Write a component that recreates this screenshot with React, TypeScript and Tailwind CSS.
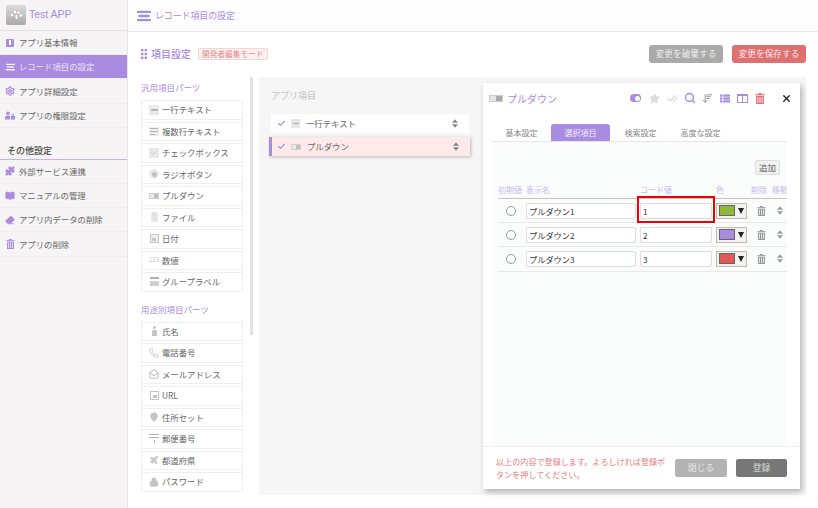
import {
  Star,
  CheckCheck,
  Search,
  ArrowDownWideNarrow,
  Check,
  X,
  Settings,
  Puzzle,
  BookOpen,
  Eraser,
  MailOpen,
  MapPin,
  Lock,
  Plane,
  Phone,
} from 'lucide-react'
import type { ReactNode } from 'react'

const jp = 'font-["Noto_Sans_CJK_JP","Noto_Sans",sans-serif]'

function Hamburger({ className }: { className: string }) {
  return (
    <svg className={className} viewBox="0 0 16 12" fill="currentColor">
      <rect x="0" y="0" width="16" height="2.6" rx="0.6" />
      <rect x="1.5" y="4.7" width="13" height="2.6" rx="0.6" />
      <rect x="0" y="9.4" width="16" height="2.6" rx="0.6" />
    </svg>
  )
}

function Updown({ className = 'text-[#888]' }: { className?: string }) {
  return (
    <svg className={`w-[6px] h-[9px] ${className}`} viewBox="0 0 7 10" fill="currentColor">
      <path d="M3.5 0 7 4H0z" />
      <path d="M3.5 10 0 6h7z" />
    </svg>
  )
}

function TrashIcon({ className }: { className: string }) {
  return (
    <svg className={className} viewBox="0 0 12 13" fill="currentColor">
      <rect x="0.5" y="1.4" width="11" height="1.3" />
      <rect x="4" y="0" width="4" height="1.4" />
      <path d="M1.4 3.4h9.2V13H1.4zM3 4.6v7.2h1V4.6zm2.5 0v7.2h1V4.6zm2.5 0v7.2h1V4.6z" fillRule="evenodd" />
    </svg>
  )
}

function PartBox({ children }: { children: ReactNode }) {
  return <span className="w-[10px] h-[10px] flex items-center justify-center bg-[#e9e9e9] text-[#bbb]">{children}</span>
}

const lineIcon = (
  <PartBox>
    <span className="w-[7px] h-[1.5px] bg-[#b5b5b5]" />
  </PartBox>
)

const pulldownIcon = (
  <span className="w-[10px] h-[6px] flex justify-end bg-[#e9e9e9] border border-[#d0d0d0]">
    <span className="w-[4px] h-full bg-[#c0c0c0]" />
  </span>
)

const iconCls = 'w-[10px] h-[10px] text-[#c4c4c4]'

const basicParts: { label: string; icon: ReactNode }[] = [
  { label: '一行テキスト', icon: lineIcon },
  {
    label: '複数行テキスト',
    icon: (
      <span className="w-[10px] h-[9px] flex flex-col justify-between py-[1px] px-[1px] bg-[#ececec]">
        <span className="h-px bg-[#b5b5b5]" />
        <span className="h-px bg-[#b5b5b5]" />
        <span className="h-px w-[5px] bg-[#b5b5b5]" />
      </span>
    ),
  },
  {
    label: 'チェックボックス',
    icon: (
      <PartBox>
        <Check className="w-[8px] h-[8px] text-[#bbb]" strokeWidth={2} />
      </PartBox>
    ),
  },
  {
    label: 'ラジオボタン',
    icon: (
      <span className="w-[10px] h-[10px] rounded-full bg-[#e9e9e9] flex items-center justify-center">
        <span className="w-[5px] h-[5px] rounded-full bg-[#c0c0c0]" />
      </span>
    ),
  },
  { label: 'プルダウン', icon: pulldownIcon },
  { label: 'ファイル', icon: <span className="w-[7px] h-[10px] bg-[#e2e2e2] border border-[#ececec]" /> },
  {
    label: '日付',
    icon: (
      <span className="w-[9px] h-[9px] border border-[#c4c4c4] bg-[#f0f0f0] flex items-end justify-center">
        <span className="w-[4px] h-[3px] bg-[#c4c4c4] mb-px" />
      </span>
    ),
  },
  { label: '数値', icon: <span className="text-[6px] text-[#c4c4c4] leading-none">123</span> },
  {
    label: 'グループラベル',
    icon: (
      <span className="w-[9px] h-[9px] flex flex-col justify-between">
        <span className="h-[2px] bg-[#b0b0b0]" />
        <span className="h-[5px] bg-[#d0d0d0]" />
      </span>
    ),
  },
]

const usageParts: { label: string; icon: ReactNode }[] = [
  {
    label: '氏名',
    icon: (
      <span className="flex flex-col items-center gap-[1px]">
        <span className="w-[3px] h-[3px] rounded-full bg-[#c4c4c4]" />
        <span className="w-[5px] h-[6px] rounded-t-[1px] bg-[#c4c4c4]" />
      </span>
    ),
  },
  { label: '電話番号', icon: <Phone className={iconCls} /> },
  { label: 'メールアドレス', icon: <MailOpen className={iconCls} strokeWidth={2.5} /> },
  {
    label: 'URL',
    icon: (
      <span className="w-[9px] h-[9px] border border-[#c4c4c4] flex items-end justify-end p-px">
        <span className="w-[4px] h-[3px] bg-[#c4c4c4]" />
      </span>
    ),
  },
  { label: '住所セット', icon: <MapPin className={iconCls} fill="currentColor" /> },
  {
    label: '郵便番号',
    icon: (
      <span className="w-[10px] h-[9px] flex flex-col items-center gap-[2px]">
        <span className="w-full h-px bg-[#b5b5b5]" />
        <span className="w-full h-px bg-[#b5b5b5]" />
        <span className="w-px h-[4px] bg-[#b5b5b5]" />
      </span>
    ),
  },
  { label: '都道府県', icon: <Plane className={iconCls} fill="currentColor" /> },
  { label: 'パスワード', icon: <Lock className={iconCls} fill="currentColor" /> },
]

function PartList({ title, parts }: { title: string; parts: { label: string; icon: ReactNode }[] }) {
  return (
    <div>
      <p className="text-[8.5px] leading-[14px] text-[#a98ce0] h-[14px] mb-[6px]">{title}</p>
      <div className="flex flex-col gap-[2px]">
        {parts.map((p) => (
          <div
            key={p.label}
            className="h-[19.5px] border border-[#efefef] flex items-center pl-[5px] bg-white text-[8.4px] text-[#666]"
          >
            <span className="w-[14px] flex items-center justify-center mr-[1px]">{p.icon}</span>
            {p.label}
          </div>
        ))}
      </div>
    </div>
  )
}

function SideItem({ label, icon, active }: { label: string; icon: ReactNode; active?: boolean }) {
  return (
    <div
      className={`h-[24.2px] flex items-center pl-[5px] text-[8.4px] border-b border-[#efedee] ${
        active ? 'bg-[#a98ce0] text-[#e9e2f7] border-[#a98ce0]' : 'text-[#666]'
      }`}
    >
      <span className={`w-[10px] flex justify-center mr-[4px] ${active ? 'text-[#f3effb]' : 'text-[#a98ce0]'}`}>{icon}</span>
      {label}
    </div>
  )
}

const rows = [
  { name: 'プルダウン1', code: '1', color: 'bg-[#8fb83a]' },
  { name: 'プルダウン2', code: '2', color: 'bg-[#a98ce0]' },
  { name: 'プルダウン3', code: '3', color: 'bg-[#e05a5a]' },
]

const gridCols = 'grid grid-cols-[28px_114px_76px_35px_21px_21px]'

export default function App() {
  const sideIcon = 'w-[10px] h-[10px]'
  return (
    <div className={`w-[818px] h-[508px] flex overflow-hidden bg-white ${jp}`}>
      {/* Sidebar */}
      <aside className="w-[128px] shrink-0 bg-[#f6f4f5] border-r border-[#e6e4e5]">
        <div className="h-[30px] flex items-center pl-[6px] gap-[3px]">
          <div className="w-[20px] h-[20px] rounded-[2px] bg-gradient-to-b from-[#dcdcdc] to-[#a9a9a9] flex items-center justify-center">
            <svg className="w-[13px] h-[10px] text-white" viewBox="0 0 13 10" fill="currentColor">
              <circle cx="2" cy="5" r="1.2" />
              <circle cx="5" cy="2" r="1.2" />
              <circle cx="8.5" cy="2.6" r="1.2" />
              <circle cx="11" cy="5.5" r="1.2" />
              <rect x="5.6" y="5" width="1.8" height="4" rx="0.9" />
            </svg>
          </div>
          <span className="text-[10.5px] text-[#a98ce0] font-['Liberation_Sans',sans-serif]">Test APP</span>
        </div>
        <div className="border-t border-[#e2e0e1]">
          <SideItem
            label="アプリ基本情報"
            icon={
              <span className="w-[8px] h-[8px] rounded-[1px] bg-[#a98ce0] flex items-center justify-center">
                <span className="w-[2px] h-[5px] bg-white" />
              </span>
            }
          />
          <SideItem label="レコード項目の設定" active icon={<Hamburger className="w-[9px] h-[8px]" />} />
          <SideItem label="アプリ詳細設定" icon={<Settings className={sideIcon} strokeWidth={3} />} />
          <SideItem
            label="アプリの権限設定"
            icon={
              <svg className="w-[11px] h-[9px]" viewBox="0 0 11 9" fill="currentColor">
                <circle cx="3.2" cy="2" r="2" />
                <path d="M0 9V6.6C0 5.4 1.2 4.6 3.2 4.6c.9 0 1.6.2 2.2.5V9z" />
                <rect x="6.4" y="5" width="4.6" height="4" />
                <path d="M7.4 5V3.8a1.3 1.3 0 0 1 2.6 0V5H9.2V3.8a.5.5 0 0 0-1 0V5z" />
              </svg>
            }
          />
        </div>
        <p className="text-[9px] font-medium text-[#444] mt-[16px] pl-[7px] h-[15px] leading-[14px]">その他設定</p>
        <div className="border-t border-[#c5b4ea]">
          <SideItem label="外部サービス連携" icon={<Puzzle className={sideIcon} fill="currentColor" />} />
          <SideItem label="マニュアルの管理" icon={<BookOpen className={sideIcon} fill="currentColor" />} />
          <SideItem label="アプリ内データの削除" icon={<Eraser className={sideIcon} fill="currentColor" />} />
          <SideItem label="アプリの削除" icon={<TrashIcon className="w-[9px] h-[10px]" />} />
        </div>
      </aside>

      {/* Main */}
      <main className="flex-1 flex flex-col min-w-0">
        <header className="h-[32px] shrink-0 border-b border-[#e4e4e4] flex items-center pl-[9px] gap-[4px] text-[#a98ce0] bg-[#fdfdfd]">
          <Hamburger className="w-[14px] h-[12px]" />
          <span className="text-[8.9px]">レコード項目の設定</span>
        </header>

        <div className="h-[45px] shrink-0 flex items-center pl-[13px] pr-[12px] pb-[2px]">
          <svg className="w-[6px] h-[10px] text-[#a98ce0] mr-[4px]" viewBox="0 0 6 10" fill="currentColor">
            <rect x="0" y="0" width="2.4" height="2.4" />
            <rect x="3.6" y="0" width="2.4" height="2.4" />
            <rect x="0" y="3.8" width="2.4" height="2.4" />
            <rect x="3.6" y="3.8" width="2.4" height="2.4" />
            <rect x="0" y="7.6" width="2.4" height="2.4" />
            <rect x="3.6" y="7.6" width="2.4" height="2.4" />
          </svg>
          <span className="text-[10px] font-medium text-[#a98ce0]">項目設定</span>
          <span className="ml-[7px] h-[12px] px-[3px] flex items-center text-[7.5px] text-[#e58a8a] bg-[#fff0f0] border border-[#f8d5d5] rounded-[2px] tracking-[0.2px]">
            開発者編集モード
          </span>
          <button className="ml-auto w-[74px] h-[18px] rounded-[3px] bg-[#aaaaaa] text-[#eee] text-[8.7px]">変更を破棄する</button>
          <button className="ml-[9px] w-[74px] h-[18px] rounded-[3px] bg-[#e07070] text-[#fbe9e9] text-[8.7px]">変更を保存する</button>
        </div>

        <div className="flex-1 flex min-h-0">
          {/* Parts column */}
          <div className="w-[131px] shrink-0 flex pl-[13px] pt-[3px] relative">
            <div className="w-[102px] flex flex-col gap-[10px]">
              <PartList title="汎用項目パーツ" parts={basicParts} />
              <PartList title="用途別項目パーツ" parts={usageParts} />
            </div>
            <div className="absolute left-[122px] top-0 w-[3px] h-[258px] bg-[#e2e2e2]" />
          </div>

          {/* App items */}
          <div className="w-[547px] h-[418px] bg-[#f6f6f6] relative pl-[12px] pt-[12px]">
            <p className="text-[9px] text-[#c3c3c3] leading-[14px] mb-[11px]">アプリ項目</p>
            <div className="w-[198px] h-[19px] bg-white flex items-center pl-[6px] pr-[11px] text-[8.4px] text-[#666]">
              <Check className="w-[9px] h-[9px] text-[#a98ce0] mr-[5px]" strokeWidth={3} />
              <span className="w-[9px] h-[9px] bg-[#e6e6e6] flex items-center justify-center mr-[6px]">
                <span className="w-[6px] h-px bg-[#aaa]" />
              </span>
              一行テキスト
              <span className="ml-auto">
                <Updown />
              </span>
            </div>
            <div className="-ml-[2px] mt-[4px] w-[201px] h-[19px] bg-[#feeaea] border-l-[3px] border-[#a98ce0] shadow-[1px_1px_3px_rgba(0,0,0,0.25)] flex items-center pl-[5px] pr-[11px] text-[8.4px] text-[#666]">
              <Check className="w-[9px] h-[9px] text-[#a98ce0] mr-[5px]" strokeWidth={3} />
              <span className="mr-[6px] flex items-center">{pulldownIcon}</span>
              プルダウン
              <span className="ml-auto">
                <Updown />
              </span>
            </div>

            {/* Edit panel */}
            <div className="absolute left-[224px] top-[6px] w-[317px] h-[406px] bg-white shadow-[2px_3px_6px_rgba(0,0,0,0.28)] flex flex-col">
              <div className="h-[30px] shrink-0 flex items-center pl-[6px] pr-[8px]">
                <span className="w-[14px] h-[7px] flex justify-end bg-[#e4e4e4] border border-[#ccc] mr-[4px]">
                  <span className="w-[6px] h-full bg-[#aaa]" />
                </span>
                <span className="text-[10px] text-[#a98ce0]">プルダウン</span>
                <div className="ml-auto flex items-center">
                  <span className="w-[11px] h-[8px] rounded-full bg-[#a98ce0] flex items-center justify-end pr-[1px] mr-[8px]">
                    <span className="w-[5px] h-[5px] rounded-full bg-white" />
                  </span>
                  <Star className="w-[11px] h-[11px] text-[#ddd] mr-[7px]" fill="currentColor" />
                  <CheckCheck className="w-[11px] h-[11px] text-[#ddd] mr-[6px]" strokeWidth={3} />
                  <Search className="w-[12px] h-[12px] text-[#a98ce0] mr-[6px]" strokeWidth={3} />
                  <ArrowDownWideNarrow className="w-[11px] h-[11px] text-[#888] mr-[7px]" />
                  <svg className="w-[10px] h-[9px] text-[#a98ce0] mr-[7px]" viewBox="0 0 10 8" fill="currentColor">
                    <rect width="2.5" height="2.2" />
                    <rect x="3.2" width="6.8" height="2.2" />
                    <rect y="2.9" width="2.5" height="2.2" />
                    <rect x="3.2" y="2.9" width="6.8" height="2.2" />
                    <rect y="5.8" width="2.5" height="2.2" />
                    <rect x="3.2" y="5.8" width="6.8" height="2.2" />
                  </svg>
                  <span className="w-[11px] h-[9px] border border-[#a98ce0] border-t-2 flex justify-center mr-[7px]">
                    <span className="w-px h-full bg-[#a98ce0]" />
                  </span>
                  <TrashIcon className="w-[10px] h-[11px] text-[#e26a6a] mr-[16px]" />
                  <X className="w-[11px] h-[11px] text-[#222]" strokeWidth={3} />
                </div>
              </div>

              <div className="mt-[11px] ml-[9px] mr-[13px] h-[18px] shrink-0 flex items-end border-b border-[#e6e6e6] text-[8px] text-[#888]">
                <span className="w-[59px] h-[17px] flex items-center justify-center">基本設定</span>
                <span className="w-[59px] h-[17px] flex items-center justify-center bg-[#a98ce0] text-[#efeafa] rounded-t-[3px]">選択項目</span>
                <span className="w-[59px] h-[17px] flex items-center justify-center ml-[1px]">検索設定</span>
                <span className="w-[59px] h-[17px] flex items-center justify-center ml-[1px]">高度な設定</span>
              </div>

              <div className="ml-[9px] mr-[13px] flex-1 bg-[#fbfcfc] relative pl-[6px] overflow-hidden">
                <div className="h-[43px] flex justify-end items-start pt-[18px] pr-[7px]">
                  <button className="w-[25px] h-[15px] text-[8.5px] text-[#666] bg-[#f1f1f1] border border-[#ddd] rounded-[2px] leading-none">追加</button>
                </div>
                <div className={`${gridCols} h-[10px] text-[8px] leading-[10px] text-[#c9b9ec] whitespace-nowrap`}>
                  <span>初期値</span>
                  <span>表示名</span>
                  <span>コード値</span>
                  <span>色</span>
                  <span>削除</span>
                  <span className="overflow-hidden">移動</span>
                </div>
                <div className="mt-[3px] border-t border-[#c4c4c4]">
                  {rows.map((r) => (
                    <div key={r.code} className={`${gridCols} h-[24.2px] items-center border-b border-[#e9e9e9]`}>
                      <span className="flex justify-center pr-[2px]">
                        <span className="w-[10px] h-[10px] rounded-full border border-[#999] bg-white" />
                      </span>
                      <input
                        readOnly
                        value={r.name}
                        className="w-[110px] h-[16px] border border-[#ddd] rounded-[2px] px-[2px] text-[8.2px] text-[#333] bg-white outline-none"
                      />
                      <input
                        readOnly
                        value={r.code}
                        className="w-[72px] h-[16px] border border-[#ddd] rounded-[2px] px-[2px] text-[8.2px] text-[#333] bg-white outline-none"
                      />
                      <span className="w-[31px] h-[16px] border border-[#c8b8ac] bg-[#f2f2f2] flex items-center pl-[2px] gap-[3px]">
                        <span className={`w-[16px] h-[11px] border border-[#666] ${r.color}`} />
                        <span className="border-x-[3.5px] border-x-transparent border-t-[6px] border-t-[#222]" />
                      </span>
                      <span className="flex justify-center">
                        <TrashIcon className="w-[9px] h-[10px] text-[#999]" />
                      </span>
                      <span className="pl-[5px]">
                        <Updown className="text-[#999]" />
                      </span>
                    </div>
                  ))}
                </div>
                {/* red highlight on the code field */}
                <div className="absolute left-[145px] top-[54px] w-[78px] h-[27px] border-2 border-[#f00000]" />
              </div>

              <div className="h-[43px] shrink-0 border-t border-[#efefef] flex items-center pl-[13px] pr-[13px]">
                <p className="w-[172px] text-[8.1px] leading-[13px] text-[#e87c7c]">以上の内容で登録します。よろしければ登録ボタンを押してください。</p>
                <button className="ml-auto w-[52px] h-[18px] rounded-[2px] bg-[#b3b3b3] text-[#e8e8e8] text-[8.7px]">閉じる</button>
                <button className="ml-[9px] w-[51px] h-[18px] rounded-[2px] bg-[#777777] text-[#d8d8d8] text-[8.7px]">登録</button>
              </div>
            </div>
          </div>
        </div>
      </main>
    </div>
  )
}
